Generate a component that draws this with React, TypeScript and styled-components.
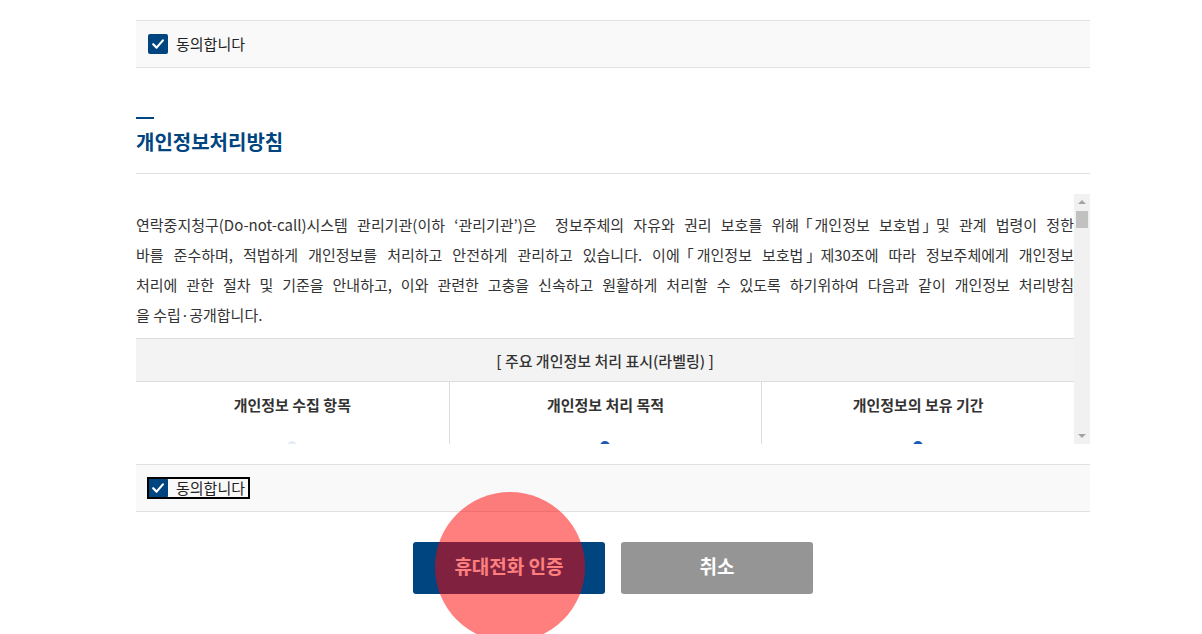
import React from 'react';
import styled, { createGlobalStyle } from 'styled-components';

// --- Palette ---
const NAVY = '#00457f';
const LINE = '#e1e1e1';
const ARROW = '#a3a3a3';

const GlobalStyle = createGlobalStyle`
  html, body {
    margin: 0;
    padding: 0;
    background: #fff;
    overflow: hidden;
  }
  body {
    font-family: 'Noto Sans CJK KR', 'Noto Sans', sans-serif;
    color: #333;
  }
`;

// --- Layout ---

const Page = styled.main`
  width: 954px;
  margin-left: 136px;
  padding-top: 20px;
`;

const AgreeBar = styled.div<{ $gap?: number }>`
  display: flex;
  align-items: center;
  height: 46px;
  margin-top: ${(p) => p.$gap ?? 0}px;
  padding: 0 12px;
  background: #f9f9f9;
  border-top: 1px solid ${LINE};
  border-bottom: 1px solid ${LINE};
`;

const AgreeLabel = styled.label<{ $focused?: boolean }>`
  display: inline-flex;
  align-items: center;
  gap: 8px;
  padding-right: 4px;
  font-size: 15px;
  line-height: 20px;
  color: #222;
  cursor: pointer;
  outline: ${(p) => (p.$focused ? '2px solid #000' : 'none')};
  outline-offset: -1px;
`;

const CheckBox = styled.span`
  display: inline-flex;
  align-items: center;
  justify-content: center;
  width: 20px;
  height: 20px;
  border-radius: 2px;
  background: ${NAVY};
`;

const TitleBlock = styled.div`
  margin-top: 49px;
  padding-bottom: 18px;
  border-bottom: 1px solid ${LINE};
`;

const TitleBar = styled.span`
  display: block;
  width: 18px;
  height: 2px;
  background: ${NAVY};
`;

const Title = styled.h2`
  margin: 10px 0 0;
  font-size: 20px;
  line-height: 26px;
  font-weight: 700;
  color: ${NAVY};
`;

// policy text box: scrolling pane plus its scroll bar
const ScrollFrame = styled.div`
  display: flex;
  margin-top: 20px;
  height: 250px;
`;

const ScrollPane = styled.div`
  flex: 1;
  min-width: 0;
  overflow-y: auto;
  scrollbar-width: none;
  color: #333;
  font-size: 15px;

  &::-webkit-scrollbar {
    display: none;
  }
`;

const ScrollTrack = styled.div`
  flex: none;
  display: flex;
  flex-direction: column;
  width: 16px;
  background: #f1f1f1;
`;

const ScrollArrow = styled.span<{ $dir: 'up' | 'down' }>`
  display: flex;
  align-items: center;
  justify-content: center;
  height: 16px;

  &::before {
    content: '';
    border-left: 4px solid transparent;
    border-right: 4px solid transparent;
    ${(p) =>
      p.$dir === 'up'
        ? `border-bottom: 4px solid ${ARROW};`
        : `border-top: 4px solid ${ARROW};`}
  }
`;

const ScrollThumb = styled.span`
  height: 17px;
  margin: 1px 2px 0;
  background: #c1c1c1;
`;

const ScrollRest = styled.span`
  flex: 1;
`;

const Intro = styled.div`
  padding-top: 16px;
  margin-bottom: 8px;
`;

// one justified line of the intro, as the policy page breaks it
const Line = styled.span<{ $last?: boolean }>`
  display: block;
  line-height: 30px;
  white-space: nowrap;
  text-align: justify;
  text-align-last: ${(p) => (p.$last ? 'left' : 'justify')};
`;

// corner brackets set tight against the words they enclose
const Bracket = styled.span<{ $open: boolean }>`
  font-feature-settings: 'halt';
  ${(p) => (p.$open ? 'margin-right: -0.25em;' : 'margin-left: -0.25em;')}
`;

const LabelTable = styled.div`
  border-top: 1px solid #dddddd;
  border-bottom: 1px solid #dddddd;
`;

const LabelHead = styled.div`
  display: flex;
  align-items: center;
  justify-content: center;
  height: 42px;
  background: #f3f3f3;
  border-bottom: 1px solid #dddddd;
  font-size: 15px;
  font-weight: 500;
  color: #333;
`;

const LabelGrid = styled.div`
  display: grid;
  grid-template-columns: repeat(3, 1fr);
`;

const LabelCell = styled.div`
  display: flex;
  flex-direction: column;
  align-items: center;
  padding: 13px 16px 24px;
  text-align: center;

  & + & {
    border-left: 1px solid #dddddd;
  }
`;

const CellTitle = styled.strong`
  font-size: 15px;
  line-height: 20px;
  font-weight: 700;
  color: #333;
`;

const CellIcon = styled.svg`
  margin-top: 24px;
  width: 60px;
  height: 60px;
`;

const CellText = styled.p`
  margin: 14px 0 0;
  font-size: 14px;
  line-height: 22px;
  color: #555;
`;

const Article = styled.section`
  margin-top: 34px;
`;

const ArticleTitle = styled.h3`
  margin: 0 0 10px;
  font-size: 16px;
  font-weight: 700;
  color: #222;
`;

const ArticleText = styled.p`
  margin: 0;
  line-height: 30px;
  word-break: keep-all;
`;

const ButtonRow = styled.div`
  display: flex;
  justify-content: center;
  gap: 16px;
  margin-top: 30px;
`;

const Button = styled.button<{ $tone: 'primary' | 'muted' }>`
  width: 192px;
  height: 52px;
  padding: 0 0 5px;
  border: 0;
  border-radius: 3px;
  background: ${(p) => (p.$tone === 'primary' ? NAVY : '#959595')};
  color: #fff;
  font-family: 'Noto Sans CJK KR', 'Noto Sans', sans-serif;
  font-size: 19px;
  font-weight: 700;
  cursor: pointer;
`;

// click marker laid over the page by the capture tool
const TapMarker = styled.div`
  position: fixed;
  left: 435px;
  top: 492px;
  width: 150px;
  height: 150px;
  border-radius: 50%;
  background: rgba(255, 0, 0, 0.5);
  pointer-events: none;
`;

// --- Data ---

const introLines = [
  '연락중지청구(Do-not-call)시스템 관리기관(이하 ‘관리기관’)은\u00a0\u00a0정보주체의 자유와 권리 보호를 위해「개인정보 보호법」및 관계 법령이 정한',
  '바를 준수하며, 적법하게 개인정보를 처리하고 안전하게 관리하고 있습니다. 이에「개인정보 보호법」제30조에 따라 정보주체에게 개인정보',
  '처리에 관한 절차 및 기준을 안내하고, 이와 관련한 고충을 신속하고 원활하게 처리할 수 있도록 하기위하여 다음과 같이 개인정보 처리방침',
  '을 수립·공개합니다.',
];

const labelCells = [
  { title: '개인정보 수집 항목', tone: '#e6edf7', text: '성명, 휴대전화번호, 연락중지 요청 번호' },
  { title: '개인정보 처리 목적', tone: '#1f5bb5', text: '연락중지청구 접수 및 처리, 본인확인' },
  { title: '개인정보의 보유 기간', tone: '#1f5bb5', text: '연락중지청구 해지 시까지' },
];

const articles = [
  {
    title: '제1조(개인정보의 처리 목적)',
    text: '관리기관은 다음의 목적을 위하여 개인정보를 처리합니다. 처리하고 있는 개인정보는 다음의 목적 이외의 용도로는 이용되지 않으며, 이용 목적이 변경되는 경우에는「개인정보 보호법」제18조에 따라 별도의 동의를 받는 등 필요한 조치를 이행할 예정입니다. 연락중지청구시스템 가입 및 해지, 본인 식별·인증, 연락중지 요청 번호의 등록 및 사업자 제공, 민원 처리 및 고지사항 전달 등을 목적으로 개인정보를 처리합니다.',
  },
  {
    title: '제2조(개인정보의 처리 및 보유 기간)',
    text: '관리기관은 법령에 따른 개인정보 보유·이용기간 또는 정보주체로부터 개인정보를 수집 시에 동의받은 개인정보 보유·이용기간 내에서 개인정보를 처리·보유합니다. 연락중지청구시스템 이용자의 개인정보는 연락중지청구 해지 시까지 보유하며, 관계 법령 위반에 따른 수사·조사 등이 진행 중인 경우에는 해당 수사·조사 종료 시까지 보유합니다.',
  },
  {
    title: '제3조(처리하는 개인정보의 항목)',
    text: '관리기관은 연락중지청구 접수 및 처리를 위하여 필수항목으로 성명, 휴대전화번호, 연락중지 요청 번호를 수집하며, 서비스 이용 과정에서 접속 로그, 접속 IP 정보, 서비스 이용 기록 등이 자동으로 생성되어 수집될 수 있습니다.',
  },
  {
    title: '제4조(개인정보의 제3자 제공)',
    text: '관리기관은 정보주체의 개인정보를 제1조(개인정보의 처리 목적)에서 명시한 범위 내에서만 처리하며, 정보주체의 동의, 법률의 특별한 규정 등「개인정보 보호법」제17조 및 제18조에 해당하는 경우에만 개인정보를 제3자에게 제공합니다. 연락중지 요청 번호는 연락중지 처리를 위하여 시스템에 참여한 사업자에게 제공되며, 사업자는 해당 번호로의 광고성 연락을 중지하여야 합니다.',
  },
  {
    title: '제5조(개인정보 처리의 위탁)',
    text: '관리기관은 원활한 개인정보 업무처리를 위하여 시스템 운영 및 유지보수 업무를 위탁하고 있으며, 위탁계약 체결 시「개인정보 보호법」제26조에 따라 위탁업무 수행목적 외 개인정보 처리금지, 기술적·관리적 보호조치, 재위탁 제한, 수탁자에 대한 관리·감독, 손해배상 등 책임에 관한 사항을 계약서 등 문서에 명시하고, 수탁자가 개인정보를 안전하게 처리하는지를 감독하고 있습니다.',
  },
  {
    title: '제6조(개인정보의 파기 절차 및 방법)',
    text: '관리기관은 개인정보 보유기간의 경과, 처리목적 달성 등 개인정보가 불필요하게 되었을 때에는 지체없이 해당 개인정보를 파기합니다. 전자적 파일 형태의 정보는 기록을 재생할 수 없는 기술적 방법을 사용하여 삭제하며, 종이에 출력된 개인정보는 분쇄기로 분쇄하거나 소각을 통하여 파기합니다.',
  },
  {
    title: '제7조(정보주체와 법정대리인의 권리·의무 및 행사방법)',
    text: '정보주체는 관리기관에 대해 언제든지 개인정보 열람·정정·삭제·처리정지 요구 등의 권리를 행사할 수 있습니다. 권리 행사는 서면, 전자우편, 모사전송(FAX) 등을 통하여 하실 수 있으며 관리기관은 이에 대해 지체 없이 조치하겠습니다. 권리 행사는 정보주체의 법정대리인이나 위임을 받은 자 등 대리인을 통하여 하실 수도 있습니다.',
  },
  {
    title: '제8조(개인정보의 안전성 확보조치)',
    text: '관리기관은 개인정보의 안전성 확보를 위해 내부관리계획 수립·시행, 정기적 직원 교육 등의 관리적 조치, 개인정보처리시스템 등의 접근권한 관리, 접근통제시스템 설치, 고유식별정보 등의 암호화, 보안프로그램 설치 등의 기술적 조치, 전산실 및 자료보관실 등의 접근통제 등 물리적 조치를 하고 있습니다.',
  },
  {
    title: '제9조(개인정보 자동 수집 장치의 설치·운영 및 거부에 관한 사항)',
    text: '관리기관은 이용자에게 개별적인 맞춤서비스를 제공하기 위해 이용정보를 저장하고 수시로 불러오는 쿠키(cookie)를 사용하지 않습니다.',
  },
  {
    title: '제10조(개인정보 보호책임자)',
    text: '관리기관은 개인정보 처리에 관한 업무를 총괄해서 책임지고, 개인정보 처리와 관련한 정보주체의 불만처리 및 피해구제 등을 위하여 개인정보 보호책임자를 지정하고 있습니다. 정보주체는 서비스를 이용하시면서 발생한 모든 개인정보 보호 관련 문의, 불만처리, 피해구제 등에 관한 사항을 개인정보 보호책임자 및 담당부서로 문의하실 수 있습니다.',
  },
  {
    title: '제11조(개인정보 열람청구)',
    text: '정보주체는「개인정보 보호법」제35조에 따른 개인정보의 열람 청구를 관리기관의 개인정보 열람청구 접수·처리 부서에 할 수 있으며, 관리기관은 정보주체의 개인정보 열람청구가 신속하게 처리되도록 노력하겠습니다.',
  },
  {
    title: '제12조(권익침해 구제방법)',
    text: '정보주체는 개인정보침해로 인한 구제를 받기 위하여 개인정보분쟁조정위원회, 한국인터넷진흥원 개인정보침해신고센터 등에 분쟁해결이나 상담 등을 신청할 수 있습니다. 이 밖에 기타 개인정보침해의 신고, 상담에 대하여는 개인정보침해신고센터(국번없이 118), 대검찰청(국번없이 1301), 경찰청(국번없이 182)에 문의하시기 바랍니다.',
  },
  {
    title: '제13조(영상정보처리기기 설치·운영)',
    text: '관리기관은 연락중지청구시스템 운영과 관련하여 영상정보처리기기를 설치·운영하지 않습니다. 다만, 향후 설치·운영이 필요한 경우에는 설치 목적, 설치 대수, 촬영 범위, 관리책임자 등을 본 처리방침에 추가하여 공개하겠습니다.',
  },
  {
    title: '제14조(가명정보의 처리)',
    text: '관리기관은 통계작성, 과학적 연구, 공익적 기록보존 등을 위하여 가명정보를 처리하지 않습니다. 가명정보를 처리하게 되는 경우에는 처리 목적, 처리 기간, 제3자 제공 및 위탁에 관한 사항을 본 처리방침에 추가하여 공개하겠습니다.',
  },
  {
    title: '제15조(개인정보 처리방침의 변경)',
    text: '이 개인정보 처리방침은 시행일로부터 적용되며, 법령 및 방침에 따른 변경내용의 추가, 삭제 및 정정이 있는 경우에는 변경사항의 시행 7일 전부터 공지사항을 통하여 고지할 것입니다. 이전의 개인정보 처리방침은 연락중지청구시스템 홈페이지에서 확인하실 수 있습니다.',
  },
  {
    title: '부칙',
    text: '이 개인정보 처리방침은 공고한 날부터 시행합니다.',
  },
];

// --- Pieces ---

// wraps 「 」 so they sit tight against the enclosed words
function withBrackets(text: string) {
  return text.split(/([「」])/).map((part, i) =>
    part === '「' || part === '」' ? (
      <Bracket key={i} $open={part === '「'}>
        {part}
      </Bracket>
    ) : (
      part
    ),
  );
}

function CheckMark() {
  return (
    <svg width="14" height="14" viewBox="0 0 14 14" aria-hidden="true">
      <path d="M2.2 7.2 L5.6 10.6 L11.9 3.4" fill="none" stroke="#fff" strokeWidth="2.2" strokeLinecap="round" strokeLinejoin="round" />
    </svg>
  );
}

function Agree({ focused, gap }: { focused?: boolean; gap?: number }) {
  return (
    <AgreeBar $gap={gap}>
      <AgreeLabel $focused={focused}>
        <CheckBox>
          <CheckMark />
        </CheckBox>
        동의합니다
      </AgreeLabel>
    </AgreeBar>
  );
}

function PersonIcon({ color }: { color: string }) {
  return (
    <CellIcon viewBox="0 0 60 60" aria-hidden="true">
      <circle cx="30" cy="7" r="5" fill={color} />
      <path d="M18 28 C18 20 23 15 30 15 C37 15 42 20 42 28 V34 H18 Z" fill={color} />
      <rect x="12" y="38" width="36" height="18" rx="3" fill="none" stroke={color} strokeWidth="3" />
      <path d="M20 47 H40" stroke={color} strokeWidth="3" strokeLinecap="round" />
    </CellIcon>
  );
}

// --- Page ---

export default function App() {
  return (
    <>
      <GlobalStyle />
      <Page>
        <Agree />

        <TitleBlock>
          <TitleBar />
          <Title>개인정보처리방침</Title>
        </TitleBlock>

        <ScrollFrame>
          <ScrollPane>
            <Intro>
              {introLines.map((line, i) => (
                <Line key={i} $last={i === introLines.length - 1}>
                  {withBrackets(line)}
                </Line>
              ))}
            </Intro>

            <LabelTable>
              <LabelHead>[ 주요 개인정보 처리 표시(라벨링) ]</LabelHead>
              <LabelGrid>
                {labelCells.map((cell) => (
                  <LabelCell key={cell.title}>
                    <CellTitle>{cell.title}</CellTitle>
                    <PersonIcon color={cell.tone} />
                    <CellText>{cell.text}</CellText>
                  </LabelCell>
                ))}
              </LabelGrid>
            </LabelTable>

            {articles.map((a) => (
              <Article key={a.title}>
                <ArticleTitle>{a.title}</ArticleTitle>
                <ArticleText>{withBrackets(a.text)}</ArticleText>
              </Article>
            ))}
          </ScrollPane>

          <ScrollTrack aria-hidden="true">
            <ScrollArrow $dir="up" />
            <ScrollThumb />
            <ScrollRest />
            <ScrollArrow $dir="down" />
          </ScrollTrack>
        </ScrollFrame>

        <Agree focused gap={20} />

        <ButtonRow>
          <Button $tone="primary">휴대전화 인증</Button>
          <Button $tone="muted">취소</Button>
        </ButtonRow>
      </Page>
      <TapMarker />
    </>
  );
}
